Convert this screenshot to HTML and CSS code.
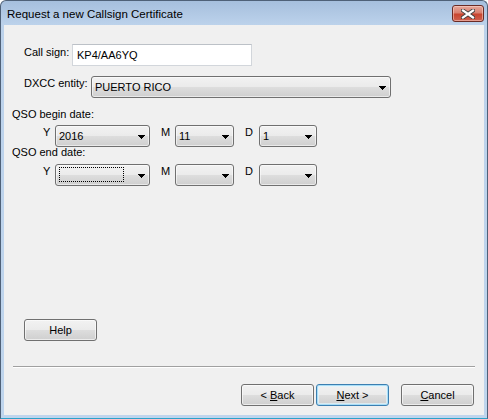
FILE: index.html
```html
<!DOCTYPE html>
<html>
<head>
<meta charset="utf-8">
<title>Request a new Callsign Certificate</title>
<link rel="stylesheet" href="styles.css">
</head>
<body>
<div class="window">
  <div class="titlebar">
    <span class="title">Request a new Callsign Certificate</span>
    <div class="close">
      <svg width="14" height="10" viewBox="0 0 14 10">
        <path d="M2 1.5 L12 8.5 M12 1.5 L2 8.5" stroke="#3f3f3f" stroke-width="4" stroke-linecap="square"/>
        <path d="M2 1.5 L12 8.5 M12 1.5 L2 8.5" stroke="#ffffff" stroke-width="2.2" stroke-linecap="square"/>
      </svg>
    </div>
  </div>
  <div class="client">
    <div class="row row-call">
      <span class="lbl lbl-call">Call sign:</span>
      <div class="edit">KP4/AA6YQ</div>
    </div>
    <div class="row row-dxcc">
      <span class="lbl lbl-dxcc">DXCC entity:</span>
      <div class="combo combo-dxcc"><span class="val">PUERTO RICO</span><svg class="arrow" width="7" height="4" viewBox="0 0 7 4" shape-rendering="crispEdges"><rect x="0" y="0" width="7" height="1"/><rect x="1" y="1" width="5" height="1"/><rect x="2" y="2" width="3" height="1"/><rect x="3" y="3" width="1" height="1"/></svg></div>
    </div>
    <div class="section sec-begin">QSO begin date:</div>
    <div class="daterow dr-begin">
      <span class="dl dl-y">Y</span>
      <div class="combo combo-y"><span class="val">2016</span><svg class="arrow" width="7" height="4" viewBox="0 0 7 4" shape-rendering="crispEdges"><rect x="0" y="0" width="7" height="1"/><rect x="1" y="1" width="5" height="1"/><rect x="2" y="2" width="3" height="1"/><rect x="3" y="3" width="1" height="1"/></svg></div>
      <span class="dl dl-m">M</span>
      <div class="combo combo-m"><span class="val">11</span><svg class="arrow" width="7" height="4" viewBox="0 0 7 4" shape-rendering="crispEdges"><rect x="0" y="0" width="7" height="1"/><rect x="1" y="1" width="5" height="1"/><rect x="2" y="2" width="3" height="1"/><rect x="3" y="3" width="1" height="1"/></svg></div>
      <span class="dl dl-d">D</span>
      <div class="combo combo-d"><span class="val">1</span><svg class="arrow" width="7" height="4" viewBox="0 0 7 4" shape-rendering="crispEdges"><rect x="0" y="0" width="7" height="1"/><rect x="1" y="1" width="5" height="1"/><rect x="2" y="2" width="3" height="1"/><rect x="3" y="3" width="1" height="1"/></svg></div>
    </div>
    <div class="section sec-end">QSO end date:</div>
    <div class="daterow dr-end">
      <span class="dl dl-y">Y</span>
      <div class="combo combo-y"><span class="focus"></span><svg class="arrow" width="7" height="4" viewBox="0 0 7 4" shape-rendering="crispEdges"><rect x="0" y="0" width="7" height="1"/><rect x="1" y="1" width="5" height="1"/><rect x="2" y="2" width="3" height="1"/><rect x="3" y="3" width="1" height="1"/></svg></div>
      <span class="dl dl-m">M</span>
      <div class="combo combo-m"><span class="val"></span><svg class="arrow" width="7" height="4" viewBox="0 0 7 4" shape-rendering="crispEdges"><rect x="0" y="0" width="7" height="1"/><rect x="1" y="1" width="5" height="1"/><rect x="2" y="2" width="3" height="1"/><rect x="3" y="3" width="1" height="1"/></svg></div>
      <span class="dl dl-d">D</span>
      <div class="combo combo-d"><span class="val"></span><svg class="arrow" width="7" height="4" viewBox="0 0 7 4" shape-rendering="crispEdges"><rect x="0" y="0" width="7" height="1"/><rect x="1" y="1" width="5" height="1"/><rect x="2" y="2" width="3" height="1"/><rect x="3" y="3" width="1" height="1"/></svg></div>
    </div>
    <div class="btn btn-help"><span>Help</span></div>
    <div class="sep"></div>
    <div class="buttons">
      <div class="btn"><span>&lt; <u>B</u>ack</span></div>
      <div class="btn btn-default"><span><u>N</u>ext &gt;</span></div>
      <div class="btn btn-cancel"><span><u>C</u>ancel</span></div>
    </div>
  </div>
</div>
</body>
</html>
```

FILE: styles.css
```css
html, body {
  margin: 0;
  padding: 0;
  background: #ffffff;
}

.window {
  box-sizing: border-box;
  width: 488px;
  height: 419px;
  border: 1px solid #4f6178;
  border-bottom-color: #2ba2c9;
  border-radius: 6px 6px 0 0;
  background: linear-gradient(#a6bfdd 0px, #bcd2eb 24px, #bfd5ed 100%);
  padding: 0 3px 3px 3px;
  display: flex;
  flex-direction: column;
  font-family: "Liberation Sans", Arial, sans-serif;
  font-size: 11px;
  color: #000000;
}

.titlebar {
  height: 24px;
  display: flex;
  align-items: flex-start;
  justify-content: space-between;
}

.title {
  font-size: 11.5px;
  line-height: 14px;
  margin: 6px 0 0 3px;
  color: #000000;
}

.close {
  box-sizing: border-box;
  width: 32px;
  height: 17px;
  margin: 4px 0 0 0;
  border: 1px solid #6a2b25;
  border-radius: 3px;
  background: linear-gradient(#e6a89b 0%, #d98070 45%, #c8452f 55%, #cf6150 100%);
  box-shadow: inset 0 0 0 1px rgba(255, 220, 210, 0.5);
  display: flex;
  align-items: center;
  justify-content: center;
}

.client {
  flex: 1;
  background: #f0f0f0;
  display: flex;
  flex-direction: column;
  padding-top: 19px;
}

.row {
  display: flex;
  align-items: flex-start;
  height: 22px;
  margin-left: 20px;
}

.row-dxcc {
  margin-top: 10px;
}

.lbl {
  line-height: 11px;
  padding-top: 3px;
}

.lbl-call { width: 48px; }
.lbl-dxcc { width: 67px; padding-top: 2px; }

.edit {
  box-sizing: border-box;
  width: 180px;
  height: 22px;
  background: #ffffff;
  border: 1px solid #d2d6db;
  border-top-color: #bcc1c7;
  padding: 5px 0 0 4px;
  line-height: 11px;
}

.combo {
  box-sizing: border-box;
  height: 22px;
  border: 1px solid #707070;
  border-radius: 3px;
  background: linear-gradient(#f2f2f2 0%, #ebebeb 48%, #dddddd 52%, #cfcfcf 100%);
  box-shadow: inset 0 0 0 1px rgba(255, 255, 255, 0.55);
  display: flex;
  align-items: flex-start;
  padding: 5px 4px 0 3px;
  line-height: 11px;
}

.combo .val {
  flex: 1;
}

.combo .arrow {
  margin-top: 4px;
  fill: #000000;
}

.combo-dxcc { width: 300px; }

.section {
  margin-left: 8px;
  line-height: 11px;
  height: 11px;
}

.sec-begin { margin-top: 11px; }

.daterow {
  display: flex;
  align-items: flex-start;
  height: 22px;
}

.dr-begin { margin-top: 5px; }
.dr-end { margin-top: 6px; }

.dl {
  line-height: 11px;
  padding-top: 2px;
}

.dl-y { margin-left: 39px; width: 12px; }
.dl-m { margin-left: 11px; width: 14px; }
.dl-d { margin-left: 11px; width: 14px; }

.combo-y { width: 95px; }
.combo-m { width: 59px; }
.combo-d { width: 58px; }

.focus {
  flex: 1;
  height: 15px;
  margin: -3px 14px 0 0;
  border: 1px dotted #000000;
  box-sizing: border-box;
}

.btn {
  box-sizing: border-box;
  width: 73px;
  height: 22px;
  border: 1px solid #707070;
  border-radius: 3px;
  background: linear-gradient(#f2f2f2 0%, #ebebeb 48%, #dddddd 52%, #cfcfcf 100%);
  box-shadow: inset 0 0 0 1px rgba(255, 255, 255, 0.6);
  display: flex;
  align-items: center;
  justify-content: center;
  line-height: 11px;
}

.btn u {
  text-decoration: underline;
  text-underline-offset: 1px;
}

.btn-help {
  margin: 133px 0 0 20px;
}

.sep {
  margin: 25px 9px 0 9px;
  height: 0;
  border-top: 1px solid #a0a0a0;
  border-bottom: 1px solid #ffffff;
}

.buttons {
  display: flex;
  justify-content: flex-end;
  margin: 16px 10px 0 0;
  gap: 2px;
}

.btn-default {
  border-color: #3c7fb1;
  box-shadow: inset 0 0 0 1px #a9def7, inset 0 0 0 2px rgba(225, 245, 253, 0.7);
}

.btn-cancel {
  margin-left: 10px;
}
```
